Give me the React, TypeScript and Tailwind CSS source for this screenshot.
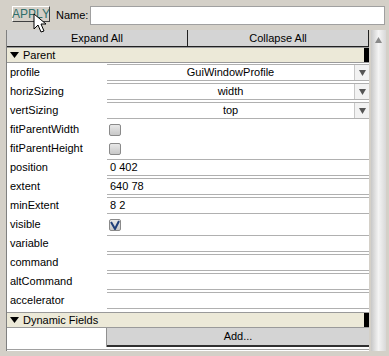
const rows: { label: string; kind: "select" | "check" | "text"; value?: string; checked?: boolean }[] = [
  { label: "profile", kind: "select", value: "GuiWindowProfile" },
  { label: "horizSizing", kind: "select", value: "width" },
  { label: "vertSizing", kind: "select", value: "top" },
  { label: "fitParentWidth", kind: "check" },
  { label: "fitParentHeight", kind: "check" },
  { label: "position", kind: "text", value: "0 402" },
  { label: "extent", kind: "text", value: "640 78" },
  { label: "minExtent", kind: "text", value: "8 2" },
  { label: "visible", kind: "check", checked: true },
  { label: "variable", kind: "text" },
  { label: "command", kind: "text" },
  { label: "altCommand", kind: "text" },
  { label: "accelerator", kind: "text" },
];

function Arrow() {
  return (
    <svg width="9" height="6" viewBox="0 0 9 6">
      <path d="M0 0h9L4.5 6z" fill="#000" />
    </svg>
  );
}

function Value({ row }: { row: (typeof rows)[number] }) {
  if (row.kind === "check") {
    return (
      <div className="flex h-full items-center bg-[#ffffff] pl-[2px]">
        <div className="flex h-[12px] w-[12px] items-center justify-center rounded-[2px] border border-[#8a8a8a] bg-gradient-to-b from-[#e8e8e8] to-[#c8c8c8]">
          {row.checked && (
            <svg width="10" height="10" viewBox="0 0 10 10">
              <path d="M1 2l4 7 4-8" stroke="#1f3f7a" strokeWidth="2" fill="none" />
            </svg>
          )}
        </div>
      </div>
    );
  }
  if (row.kind === "select") {
    return (
      <div className="flex h-full border-y border-[#b0b0b0] bg-white">
        <div className="flex flex-1 items-center justify-center">{row.value}</div>
        <div className="flex w-[15px] items-center justify-center border-l border-[#c8c8c8] bg-[#f2f2f2]">
          <svg width="7" height="6" viewBox="0 0 7 6">
            <path d="M0 0h7L3.5 6z" fill="#555" />
          </svg>
        </div>
      </div>
    );
  }
  return (
    <div className="flex h-full items-center border-y border-[#b0b0b0] bg-white pl-[3px]">{row.value}</div>
  );
}

function Header({ title }: { title: string }) {
  return (
    <div className="flex h-[16px] items-center border-y border-[#9a9a9a] bg-[#ece9d8]">
      <div className="ml-[3px] mr-[4px]">
        <Arrow />
      </div>
      <span className="flex-1">{title}</span>
      <div className="h-full w-[5px] bg-black" />
    </div>
  );
}

export default function App() {
  return (
    <div
      className="relative h-[356px] w-[389px] overflow-hidden bg-[#d4d0c8] text-[11px] leading-none text-black"
      style={{ fontFamily: '"Liberation Sans", Arial, sans-serif' }}
    >
      <div className="flex h-[30px] items-center pl-[12px] pr-[4px]">
        <div className="mb-[3px] flex h-[16px] w-[38px] items-center justify-center border border-t-[#ffffff] border-l-[#ffffff] border-b-[#404040] border-r-[#404040] bg-[#d4d0c8] text-[12px] text-[#2f6f6a]">
          APPLY
        </div>
        <span className="ml-[6px] w-[34px]">Name:</span>
        <div className="h-[19px] flex-1 border border-[#a0a0a0] bg-white" />
      </div>

      <div className="ml-[6px] mr-[3px] flex h-[321px] border-l border-[#808080]">
        <div className="flex w-[363px] flex-col">
          <div className="flex h-[17px]">
            <div className="flex flex-1 items-center justify-center border-r border-b border-[#202020] bg-[#d4d4d4] pt-[1px]">Expand All</div>
            <div className="flex flex-1 items-center justify-center border-r border-b border-[#202020] bg-[#d4d4d4] pt-[1px]">Collapse All</div>
          </div>
          <Header title="Parent" />
          {rows.map((r) => (
            <div key={r.label} className="flex h-[19px] bg-white">
              <div className="flex w-[100px] items-center pl-[3px]">{r.label}</div>
              <div className="flex-1 py-[1px]">
                <Value row={r} />
              </div>
            </div>
          ))}
          <div className="h-[2px] bg-white" />
          <Header title="Dynamic Fields" />
          <div className="flex h-[19px] bg-white">
            <div className="w-[100px] border-r border-[#909090]" />
            <div className="flex flex-1 items-center justify-center border-b-2 border-[#303030] bg-[#d4d4d4]">Add...</div>
          </div>
          <div className="h-[2px] bg-white" />
          <div className="h-px bg-[#a0a0a0]" />
          <div className="flex-1 bg-white" />
        </div>
        <div className="ml-[2px] flex w-[15px] flex-col items-center bg-gradient-to-r from-[#c8c8c8] via-[#f4f4f4] to-[#d8d8d8] pt-[7px]">
          <svg width="7" height="6" viewBox="0 0 7 6">
            <path d="M3.5 0L7 6H0z" fill="#8a8a8a" />
          </svg>
        </div>
      </div>

      <svg className="absolute left-[33px] top-[13px]" width="14" height="22" viewBox="0 0 14 22">
        <path d="M1 1v15l4-4 3 7 3-1-3-7h5z" fill="#fff" stroke="#000" strokeWidth="1" />
      </svg>
    </div>
  );
}
